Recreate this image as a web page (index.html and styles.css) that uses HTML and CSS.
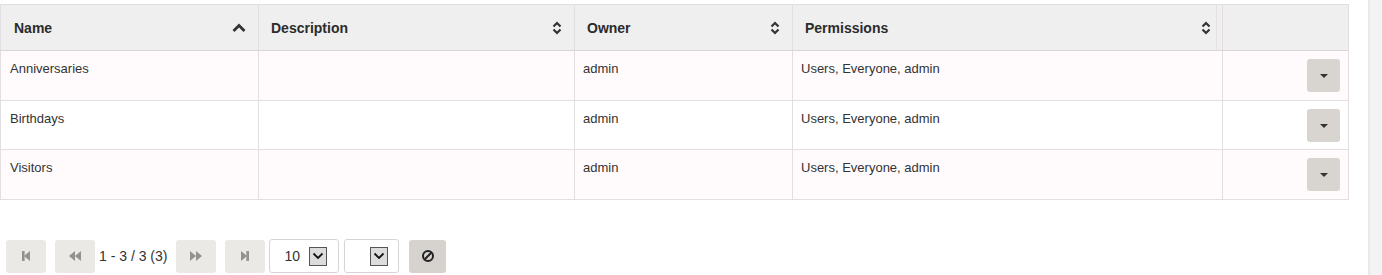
FILE: index.html
```html
<!DOCTYPE html>
<html>
<head>
<meta charset="utf-8">
<link rel="stylesheet" href="styles.css">
</head>
<body>
<div class="page">
  <main class="main">
    <table class="grid">
      <colgroup>
        <col class="c-name"><col class="c-desc"><col class="c-owner"><col class="c-perm"><col class="c-act">
      </colgroup>
      <thead>
        <tr>
          <th class="first"><div class="th"><span>Name</span>
            <svg class="sort" width="14" height="10" viewBox="0 0 14 10"><path d="M1.5 8 L7 2.5 L12.5 8" fill="none" stroke="#333" stroke-width="2.8"/></svg></div></th>
          <th><div class="th"><span>Description</span>
            <svg class="sort" width="10" height="14" viewBox="0 0 10 14"><path d="M1.5 5.5 L5 2 L8.5 5.5 M1.5 8.5 L5 12 L8.5 8.5" fill="none" stroke="#333" stroke-width="2.2"/></svg></div></th>
          <th><div class="th"><span>Owner</span>
            <svg class="sort" width="10" height="14" viewBox="0 0 10 14"><path d="M1.5 5.5 L5 2 L8.5 5.5 M1.5 8.5 L5 12 L8.5 8.5" fill="none" stroke="#333" stroke-width="2.2"/></svg></div></th>
          <th class="perm"><div class="th"><span>Permissions</span>
            <svg class="sort" width="10" height="14" viewBox="0 0 10 14"><path d="M1.5 5.5 L5 2 L8.5 5.5 M1.5 8.5 L5 12 L8.5 8.5" fill="none" stroke="#333" stroke-width="2.2"/></svg></div></th>
          <th class="act"></th>
        </tr>
      </thead>
      <tbody>
        <tr class="odd">
          <td class="first">Anniversaries</td><td></td><td>admin</td><td>Users, Everyone, admin</td>
          <td class="act"><button class="dd"><span class="caret"></span></button></td>
        </tr>
        <tr class="even short">
          <td class="first">Birthdays</td><td></td><td>admin</td><td>Users, Everyone, admin</td>
          <td class="act"><button class="dd"><span class="caret"></span></button></td>
        </tr>
        <tr class="odd">
          <td class="first">Visitors</td><td></td><td>admin</td><td>Users, Everyone, admin</td>
          <td class="act"><button class="dd"><span class="caret"></span></button></td>
        </tr>
      </tbody>
    </table>

    <div class="pager">
      <button class="pbtn" aria-label="first">
        <svg width="12" height="12" viewBox="0 0 12 12"><rect x="2" y="1" width="2.6" height="10" fill="#949290"/><path d="M10 1 L10 11 L4 6 Z" fill="#949290"/></svg>
      </button>
      <button class="pbtn" aria-label="prev">
        <svg width="14" height="12" viewBox="0 0 14 12"><path d="M7 1 L7 11 L1 6 Z M13 1 L13 11 L7 6 Z" fill="#949290"/></svg>
      </button>
      <span class="count">1 - 3 / 3 (3)</span>
      <button class="pbtn" aria-label="next">
        <svg width="14" height="12" viewBox="0 0 14 12"><path d="M1 1 L1 11 L7 6 Z M7 1 L7 11 L13 6 Z" fill="#949290"/></svg>
      </button>
      <button class="pbtn" aria-label="last">
        <svg width="12" height="12" viewBox="0 0 12 12"><path d="M2 1 L2 11 L8 6 Z" fill="#949290"/><rect x="7.4" y="1" width="2.6" height="10" fill="#949290"/></svg>
      </button>
      <div class="sel sel-size"><span class="val">10</span><span class="arrow"><svg width="12" height="8" viewBox="0 0 12 8"><path d="M1.5 1.5 L6 6 L10.5 1.5" fill="none" stroke="#111" stroke-width="1.8"/></svg></span></div>
      <div class="sel sel-empty"><span class="val"></span><span class="arrow"><svg width="12" height="8" viewBox="0 0 12 8"><path d="M1.5 1.5 L6 6 L10.5 1.5" fill="none" stroke="#111" stroke-width="1.8"/></svg></span></div>
      <button class="pbtn clear" aria-label="clear">
        <svg width="14" height="14" viewBox="0 0 14 14"><circle cx="7" cy="7" r="5" fill="none" stroke="#222" stroke-width="2"/><path d="M3.5 10.5 L10.5 3.5" stroke="#222" stroke-width="2"/></svg>
      </button>
    </div>
  </main>
  <div class="scrollbar"></div>
</div>
</body>
</html>
```

FILE: styles.css
```css
html, body {
  margin: 0;
  padding: 0;
  background: #fff;
}
body {
  font-family: "Liberation Sans", Arial, sans-serif;
  color: #333;
  width: 1382px;
  height: 275px;
  overflow: hidden;
}
.page {
  display: flex;
  height: 275px;
}
.main {
  flex: 1;
  padding: 4px 0 0 0;
}
.scrollbar {
  width: 12px;
  margin-right: 0;
  background: #f3f3f3;
  border-left: 2px solid #e9e9e9;
}
.grid {
  border-collapse: collapse;
  table-layout: fixed;
  width: 1348px;
  font-size: 13px;
}
.c-name { width: 258px; }
.c-desc { width: 316px; }
.c-owner { width: 218px; }
.c-perm { width: 430px; }
.c-act { width: 126px; }

.grid th {
  background: #efefef;
  height: 45px;
  padding: 0 12px 0 12px;
  border: 1px solid #e2dee1;
  border-bottom: 1px solid #d9d5d8;
  text-align: left;
  font-size: 14px;
  font-weight: bold;
  color: #2b2b2b;
  vertical-align: middle;
}
.grid th.first { padding-left: 13px; }
.grid th.perm {
  padding-right: 11px;
  box-shadow: inset -5px 0 0 #efefef, inset -6px 0 0 #e4e0e3;
}
.th {
  display: flex;
  align-items: center;
  justify-content: space-between;
}
.sort { display: block; }

.grid td {
  border: 1px solid #e2dee1;
  padding: 10px 9px 0 8px;
  vertical-align: top;
  height: 30px;
  color: #333;
}
.grid td.first { padding-left: 9px; }
.grid tr.odd td { background: #fffbfd; }
.grid tr.even td { background: #fff; }
.grid td.act {
  text-align: right;
  padding: 8px 8px 0 0;
  height: 41px;
}
.grid tr.short td.act { height: 40px; }

.dd {
  width: 33px;
  height: 33px;
  border: none;
  border-radius: 3px;
  background: #d8d5d1;
  display: inline-flex;
  align-items: center;
  justify-content: center;
  padding: 0;
}
.caret {
  width: 0;
  height: 0;
  border-left: 4px solid transparent;
  border-right: 4px solid transparent;
  border-top: 4px solid #333;
}

.pager {
  display: flex;
  align-items: center;
  margin-top: 39px;
  padding-left: 6px;
  height: 34px;
}
.pbtn {
  width: 40px;
  height: 33px;
  border: none;
  border-radius: 3px;
  background: #ebe9e6;
  display: inline-flex;
  align-items: center;
  justify-content: center;
  padding: 0;
  margin-right: 9px;
}
.count {
  font-size: 14px;
  color: #333;
  margin: 0 9px 0 -5px;
}
.sel {
  border: 1px solid #d7d4d7;
  border-radius: 3px;
  background: #fff;
  display: inline-flex;
  align-items: center;
  box-sizing: border-box;
  height: 34px;
}
.sel-size { width: 70px; padding-left: 14px; margin-left: -5px; margin-right: 5px; }
.sel-empty { width: 55px; padding-left: 25px; margin-right: 10px; }
.sel .val {
  font-size: 14px;
  color: #333;
  width: 25px;
}
.sel-empty .val { width: 0; }
.arrow {
  width: 18px;
  height: 19px;
  box-sizing: border-box;
  border: 1px solid #555;
  background: #dcdcdc;
  display: inline-flex;
  align-items: center;
  justify-content: center;
}
.pbtn.clear {
  width: 37px;
  background: #d6d3cf;
}
```
